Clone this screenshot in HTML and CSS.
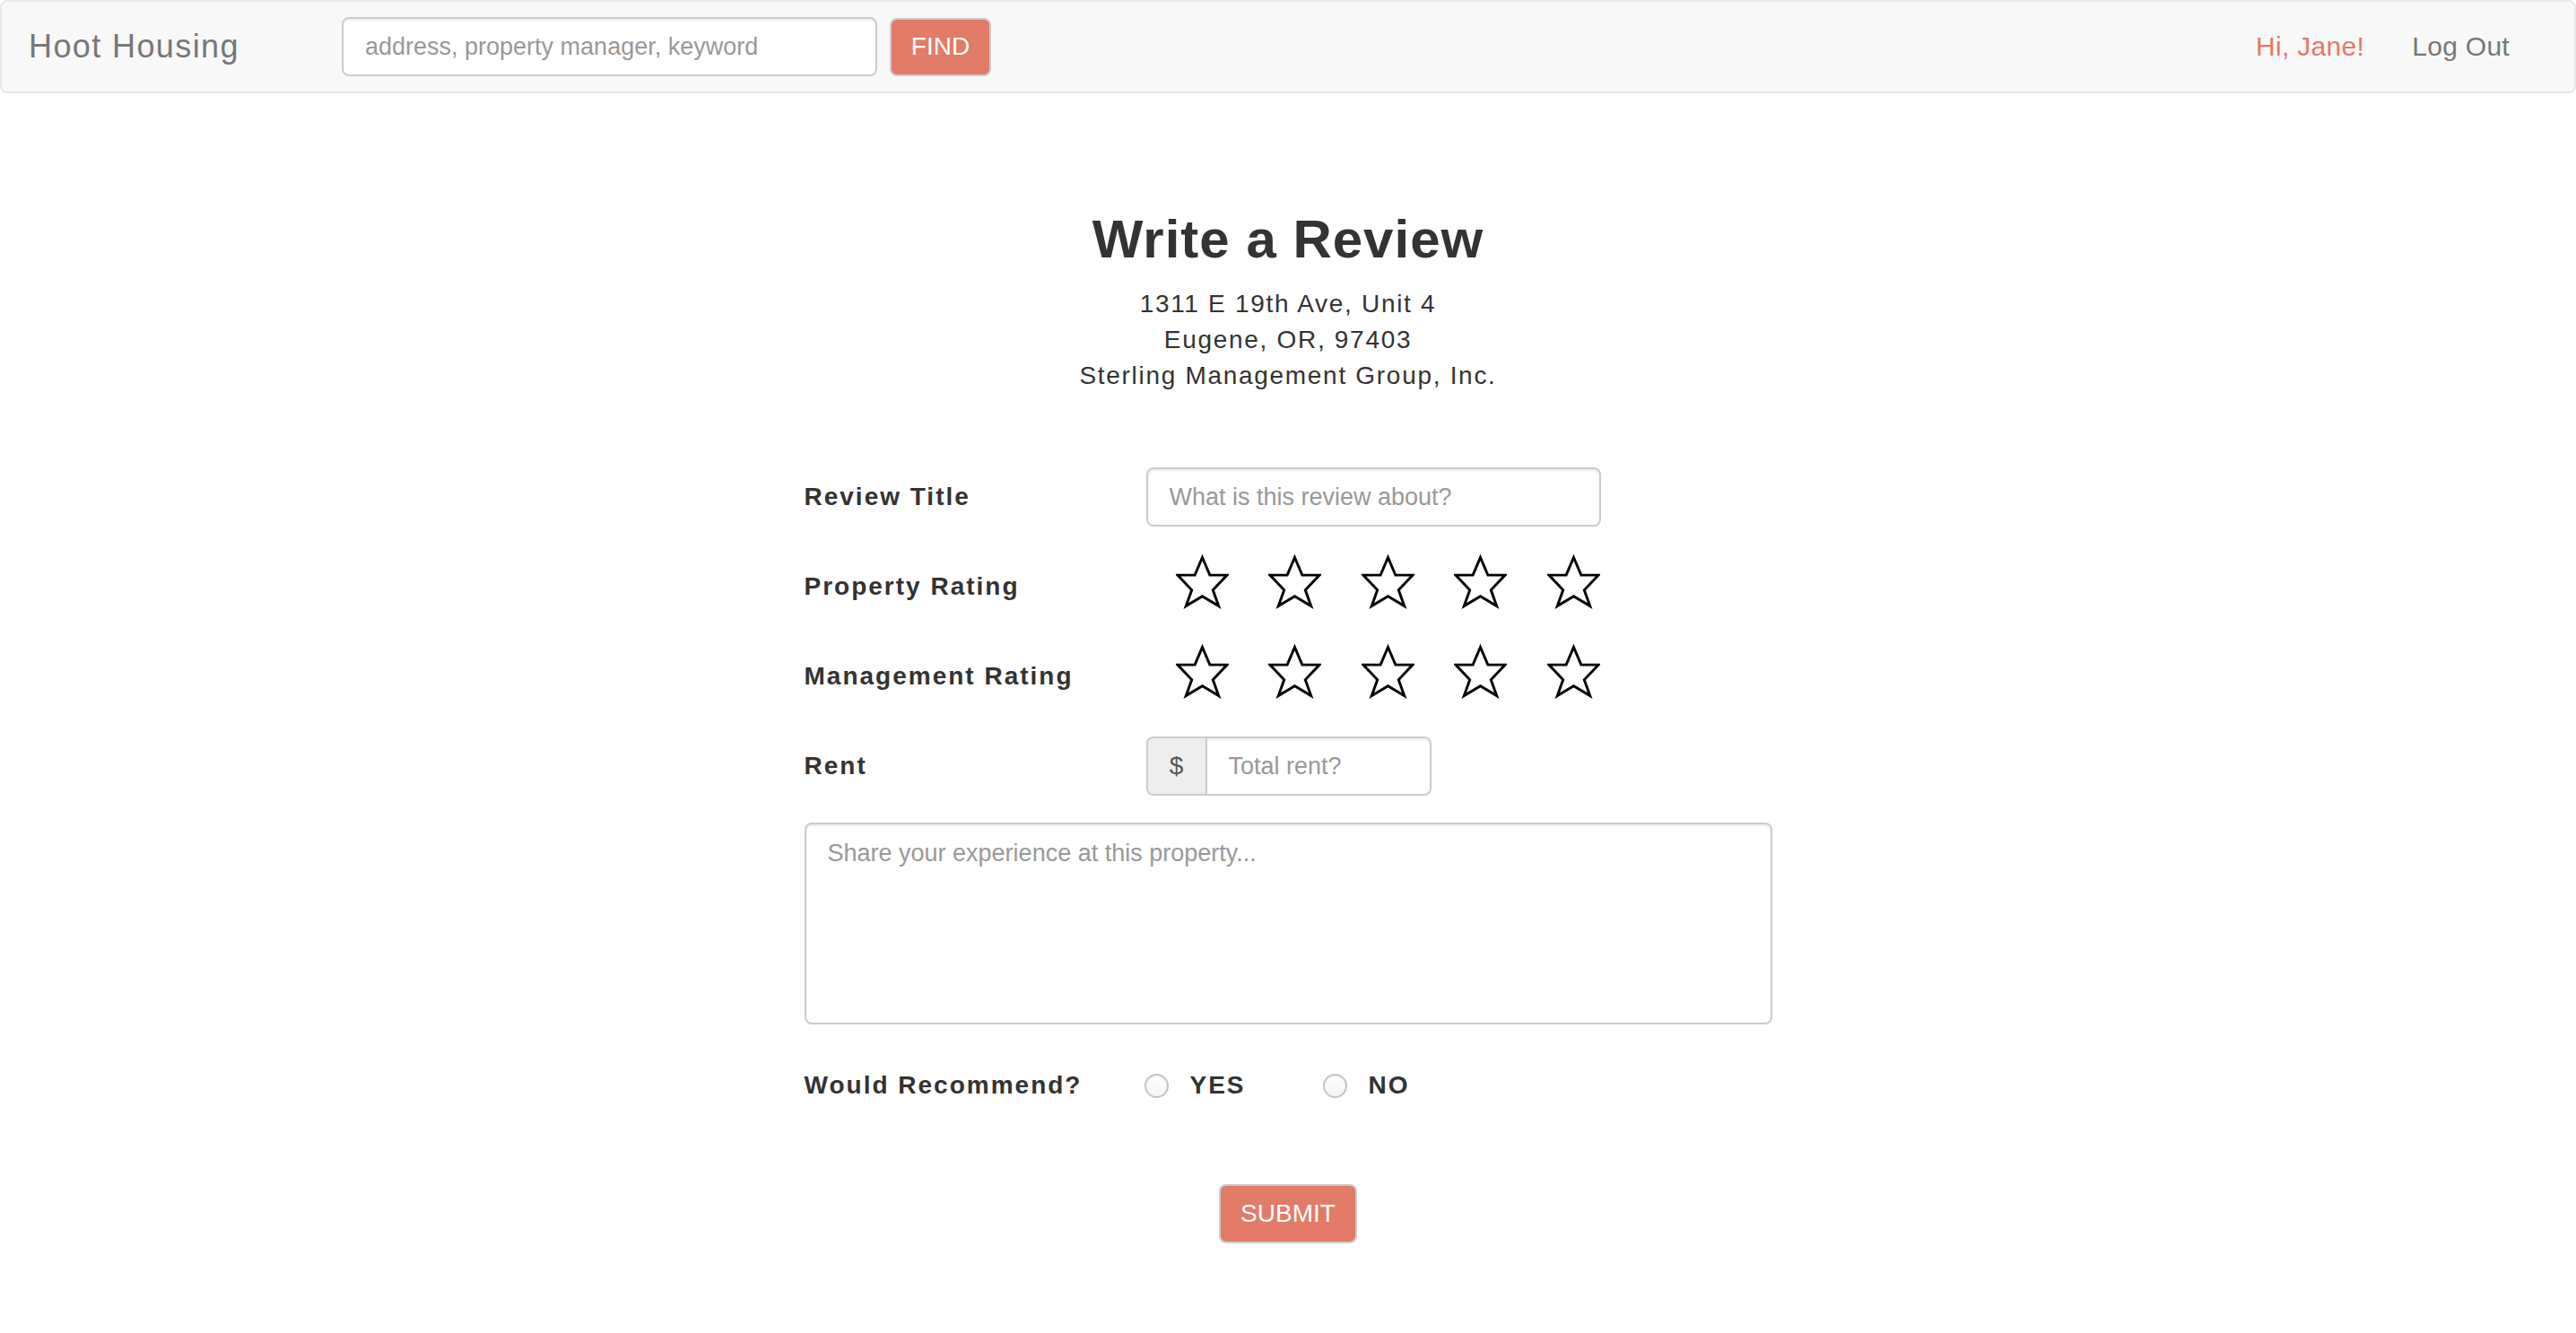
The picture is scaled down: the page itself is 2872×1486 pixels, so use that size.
FILE: index.html
```html
<!DOCTYPE html>
<html lang="en">
<head>
<meta charset="utf-8">
<title>Hoot Housing - Write a Review</title>
<link rel="stylesheet" href="styles.css">
</head>
<body>
<nav class="navbar">
  <a class="brand" href="#">Hoot Housing</a>
  <form class="search">
    <input class="search-input" type="text" placeholder="address, property manager, keyword">
    <button class="btn btn-find" type="button">FIND</button>
  </form>
  <ul class="nav-right">
    <li><a class="nav-link greet" href="#">Hi, Jane!</a></li>
    <li><a class="nav-link" href="#">Log Out</a></li>
  </ul>
</nav>

<main class="page">
  <h1 class="title">Write a Review</h1>
  <div class="address">
    <div>1311 E 19th Ave, Unit 4</div>
    <div>Eugene, OR, 97403</div>
    <div>Sterling Management Group, Inc.</div>
  </div>

  <form class="review-form">
    <div class="row">
      <label class="label">Review Title</label>
      <input class="field title-field" type="text" placeholder="What is this review about?">
    </div>
    <div class="row">
      <label class="label">Property Rating</label>
      <div class="stars">
        <svg class="star" viewBox="0 0 60 60"><polygon points="30,2 38.5,22 58,22 42,39 48.5,57 30,46 11.5,57 18,39 2,22 21.5,22"/></svg>
        <svg class="star" viewBox="0 0 60 60"><polygon points="30,2 38.5,22 58,22 42,39 48.5,57 30,46 11.5,57 18,39 2,22 21.5,22"/></svg>
        <svg class="star" viewBox="0 0 60 60"><polygon points="30,2 38.5,22 58,22 42,39 48.5,57 30,46 11.5,57 18,39 2,22 21.5,22"/></svg>
        <svg class="star" viewBox="0 0 60 60"><polygon points="30,2 38.5,22 58,22 42,39 48.5,57 30,46 11.5,57 18,39 2,22 21.5,22"/></svg>
        <svg class="star" viewBox="0 0 60 60"><polygon points="30,2 38.5,22 58,22 42,39 48.5,57 30,46 11.5,57 18,39 2,22 21.5,22"/></svg>
      </div>
    </div>
    <div class="row">
      <label class="label">Management Rating</label>
      <div class="stars">
        <svg class="star" viewBox="0 0 60 60"><polygon points="30,2 38.5,22 58,22 42,39 48.5,57 30,46 11.5,57 18,39 2,22 21.5,22"/></svg>
        <svg class="star" viewBox="0 0 60 60"><polygon points="30,2 38.5,22 58,22 42,39 48.5,57 30,46 11.5,57 18,39 2,22 21.5,22"/></svg>
        <svg class="star" viewBox="0 0 60 60"><polygon points="30,2 38.5,22 58,22 42,39 48.5,57 30,46 11.5,57 18,39 2,22 21.5,22"/></svg>
        <svg class="star" viewBox="0 0 60 60"><polygon points="30,2 38.5,22 58,22 42,39 48.5,57 30,46 11.5,57 18,39 2,22 21.5,22"/></svg>
        <svg class="star" viewBox="0 0 60 60"><polygon points="30,2 38.5,22 58,22 42,39 48.5,57 30,46 11.5,57 18,39 2,22 21.5,22"/></svg>
      </div>
    </div>
    <div class="row">
      <label class="label">Rent</label>
      <div class="input-group">
        <span class="addon">$</span>
        <input class="group-field" type="text" placeholder="Total rent?">
      </div>
    </div>
    <textarea class="experience" placeholder="Share your experience at this property..."></textarea>
    <div class="row recommend">
      <label class="label">Would Recommend?</label>
      <div class="radios">
        <label class="radio-opt"><input type="radio" name="rec" class="radio"><span>YES</span></label>
        <label class="radio-opt"><input type="radio" name="rec" class="radio"><span>NO</span></label>
      </div>
    </div>
    <div class="submit-wrap">
      <button class="btn btn-submit" type="button">SUBMIT</button>
    </div>
  </form>
</main>
</body>
</html>
```

FILE: styles.css
```css
* { box-sizing: border-box; }

html, body {
  margin: 0;
  padding: 0;
  background: #ffffff;
}

body {
  font-family: "Liberation Sans", Arial, Helvetica, sans-serif;
  color: #333333;
}

/* ---------- navbar ---------- */
.navbar {
  display: flex;
  align-items: center;
  height: 104px;
  background: #f8f8f8;
  border: 2px solid #e7e7e7;
  border-radius: 8px;
}

.brand {
  width: 379px;
  padding-left: 30px;
  font-size: 36px;
  letter-spacing: 1.4px;
  color: #777777;
  text-decoration: none;
}

.search {
  display: flex;
  align-items: center;
  gap: 14px;
  margin: 0;
}

.search-input {
  width: 597px;
  height: 66px;
  padding: 0 24px;
  font-family: inherit;
  font-size: 27px;
  color: #555;
  background: #fff;
  border: 2px solid #cccccc;
  border-radius: 8px;
  box-shadow: inset 0 2px 2px rgba(0, 0, 0, 0.075);
  outline: none;
}

.search-input::placeholder,
.field::placeholder,
.group-field::placeholder,
.experience::placeholder {
  color: #999999;
}

.btn {
  font-family: inherit;
  font-size: 28px;
  color: #ffffff;
  background: #e27b67;
  border: 2px solid #cccccc;
  border-radius: 8px;
  cursor: pointer;
}

.btn-find {
  width: 113px;
  height: 65px;
  padding: 0;
}

.nav-right {
  display: flex;
  align-items: center;
  gap: 53px;
  margin: 0 0 0 auto;
  padding: 0 72px 0 0;
  list-style: none;
}

.nav-link {
  font-size: 30px;
  letter-spacing: 0.3px;
  color: #777777;
  text-decoration: none;
}

.nav-link.greet {
  color: #e27b67;
}

/* ---------- page ---------- */
.page {
  padding-top: 130px;
}

.title {
  margin: 0;
  text-align: center;
  font-size: 60px;
  line-height: 66px;
  font-weight: 700;
  letter-spacing: 1px;
  color: #333333;
}

.address {
  margin-top: 19px;
  text-align: center;
  font-size: 28px;
  line-height: 40px;
  letter-spacing: 1.7px;
  color: #333333;
}

/* ---------- form ---------- */
.review-form {
  width: 1079px;
  margin: 82px auto 0;
}

.row {
  display: flex;
  align-items: center;
  min-height: 66px;
  margin-bottom: 34px;
}

.label {
  width: 381px;
  flex: 0 0 381px;
  font-size: 28px;
  font-weight: 700;
  letter-spacing: 2px;
  color: #333333;
}

.field {
  width: 507px;
  height: 66px;
  padding: 0 24px;
  font-family: inherit;
  font-size: 27px;
  color: #555;
  border: 2px solid #cccccc;
  border-radius: 8px;
  box-shadow: inset 0 2px 2px rgba(0, 0, 0, 0.075);
  outline: none;
}

.stars {
  display: flex;
  align-items: center;
  gap: 44.5px;
  padding-left: 33px;
  margin-top: -10px;
}

.star {
  width: 59px;
  height: 62px;
  display: block;
}

.star polygon {
  fill: #ffffff;
  stroke: #000000;
  stroke-width: 3;
  stroke-linejoin: miter;
}

.input-group {
  display: flex;
  width: 318px;
  height: 66px;
  border: 2px solid #cccccc;
  border-radius: 8px;
  overflow: hidden;
  box-shadow: inset 0 2px 2px rgba(0, 0, 0, 0.075);
}

.addon {
  display: flex;
  align-items: center;
  justify-content: center;
  width: 66px;
  flex: 0 0 66px;
  font-size: 28px;
  color: #555555;
  background: #eeeeee;
  border-right: 2px solid #cccccc;
}

.group-field {
  flex: 1;
  min-width: 0;
  padding: 0 24px;
  font-family: inherit;
  font-size: 27px;
  color: #555;
  border: none;
  background: transparent;
  outline: none;
}

.experience {
  display: block;
  width: 1079px;
  height: 225px;
  margin: -4px 0 0;
  padding: 12px 24px;
  font-family: inherit;
  font-size: 27px;
  line-height: 40px;
  color: #555;
  border: 2px solid #cccccc;
  border-radius: 8px;
  box-shadow: inset 0 2px 2px rgba(0, 0, 0, 0.075);
  resize: none;
  outline: none;
}

.recommend {
  margin-top: 35px;
  margin-bottom: 0;
}

.radios {
  display: flex;
  align-items: center;
  gap: 88px;
}

.radio-opt {
  display: flex;
  align-items: center;
  gap: 24px;
  font-size: 28px;
  font-weight: 700;
  letter-spacing: 2px;
  color: #333333;
}

.radio {
  appearance: none;
  -webkit-appearance: none;
  width: 27px;
  height: 27px;
  margin: 0 0 0 -2px;
  border: 2px solid #c4c4c4;
  border-radius: 50%;
  background: linear-gradient(#ffffff, #f4f4f4);
  box-shadow: inset 0 1px 2px rgba(0, 0, 0, 0.08);
}

.submit-wrap {
  display: flex;
  justify-content: center;
  margin-top: 77px;
}

.btn-submit {
  width: 154px;
  height: 66px;
  padding: 0;
}
```
